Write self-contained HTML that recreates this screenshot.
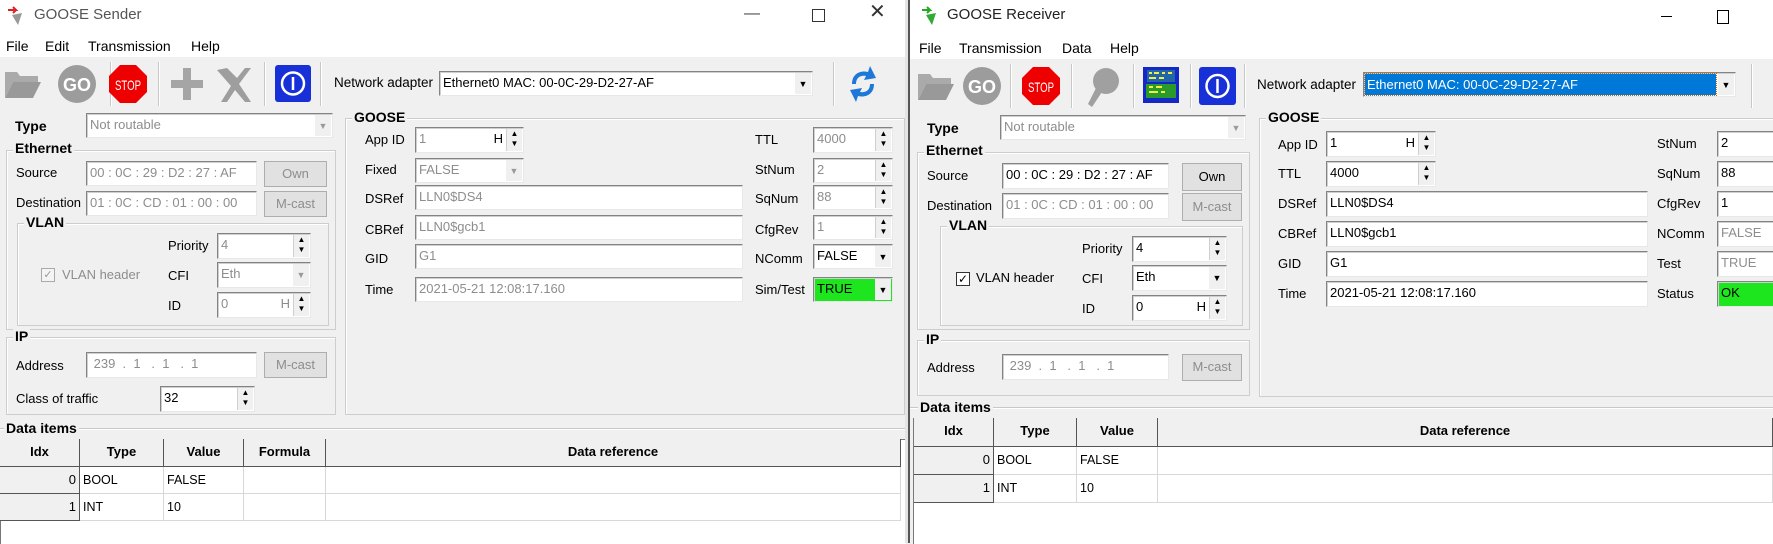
<!DOCTYPE html>
<html><head><meta charset="utf-8"><style>
body{margin:0;width:1773px;height:543px;position:relative;overflow:hidden;background:#f0f0f0;font:13px "Liberation Sans",sans-serif;color:#000}
.a{position:absolute}
.l{position:absolute;line-height:16px;white-space:nowrap}
.f{position:absolute;background:#fff;border:1px solid;border-color:#838383 #e8e8e8 #e8e8e8 #838383;box-shadow:inset 1px 1px 0 #cfcfcf;box-sizing:border-box;padding:0 3px;line-height:22px;white-space:nowrap;overflow:hidden}
.d{color:#8d8d8d}
.sp{position:absolute;right:1px;top:1px;bottom:1px;width:15px;background:#f0f0f0;border-left:1px solid #cfcfcf;font-size:8px;line-height:10px;text-align:center;color:#000}
.dd{position:absolute;right:1px;top:1px;bottom:1px;width:16px;background:#f0f0f0;font-size:9px;line-height:22px;text-align:center;color:#000}
.dd.x{color:#9a9a9a}
.h{position:absolute;right:20px;top:0}
.g{position:absolute;border:1px solid #cdcdcd;box-shadow:inset 1px 1px 0 #fff;box-sizing:border-box}
.gt{position:absolute;font-weight:bold;background:#f0f0f0;padding:0 2px;line-height:18px;font-size:14px}
.b{position:absolute;background:#e1e1e1;border:1px solid #adadad;box-sizing:border-box;text-align:center;line-height:24px}
.sep{position:absolute;top:62px;width:1px;height:44px;background:#c8c8c8;box-shadow:1px 0 0 #fff}
.tb{position:absolute;background:#fff;border-left:1px solid #777;border-top:1px solid #777}
.hc{position:absolute;background:#f0f0f0;border-right:1px solid #555;border-bottom:1px solid #555;box-sizing:border-box;font-weight:bold;text-align:center;line-height:26px}
.c{position:absolute;border-right:1px solid #d8d8d8;border-bottom:1px solid #d8d8d8;box-sizing:border-box;line-height:26px;padding-left:3px;font-size:12.5px}
.ic{position:absolute;background:#f0f0f0;border-right:1px solid #555;border-bottom:1px solid #555;box-sizing:border-box;line-height:26px;text-align:right;padding-right:3px}
.w{position:absolute;background:#fff}
</style></head><body>

<!-- ============ SENDER ============ -->
<div class="w" style="left:0;top:0;width:905px;height:57px"></div>
<svg class="a" style="left:6px;top:6px" width="22" height="22" viewBox="0 0 22 22"><path d="M2 4h8l-3-3M10 4l-3 3" stroke="#d22" stroke-width="2" fill="none"/><path d="M6 9l10-2-4 12z" fill="#999"/></svg>
<div class="l" style="left:34px;top:7px;font-size:15px;color:#555">GOOSE Sender</div>
<div class="l" style="left:744px;top:6px;font-size:16px;color:#444">—</div>
<div class="a" style="left:812px;top:9px;width:11px;height:11px;border:1px solid #333"></div>
<div class="l" style="left:869px;top:4px;font-size:20px;color:#333">✕</div>
<div class="l" style="left:6px;top:38px;font-size:14px">File</div>
<div class="l" style="left:45px;top:38px;font-size:14px">Edit</div>
<div class="l" style="left:88px;top:38px;font-size:14px">Transmission</div>
<div class="l" style="left:191px;top:38px;font-size:14px">Help</div>

<svg class="a" style="left:3px;top:66px" width="40" height="36" viewBox="0 0 40 36"><path d="M2 6h12l3 4h18v6H10L2 32z" fill="#aaa"/><path d="M10 16h28l-8 16H2z" fill="#999"/></svg>
<svg class="a" style="left:57px;top:64px" width="40" height="40"><circle cx="20" cy="20" r="19" fill="#9c9c9c"/><text x="20" y="27" font-family="Liberation Sans" font-weight="bold" font-size="18" fill="#fff" text-anchor="middle">GO</text></svg>
<div class="sep" style="left:110px"></div>
<svg class="a" style="left:108px;top:64px" width="40" height="40"><polygon points="12,1 28,1 39,12 39,28 28,39 12,39 1,28 1,12" fill="#e00"/><text x="20" y="26" font-family="Liberation Sans" font-size="14" fill="#fff" text-anchor="middle" textLength="26" lengthAdjust="spacingAndGlyphs">STOP</text></svg>
<div class="sep" style="left:158px"></div>
<svg class="a" style="left:170px;top:66px" width="34" height="36"><path d="M13 2h8v12h12v8H21v12h-8V22H1v-8h12z" fill="#a5a5a5"/></svg>
<svg class="a" style="left:213px;top:64px" width="40" height="40"><path d="M4 6l14 16L8 38h6l8-12 10 12h6L26 20 38 4h-6l-8 10-10-10z" fill="#9e9e9e"/></svg>
<div class="sep" style="left:264px"></div>
<div class="a" style="left:275px;top:65px;width:36px;height:37px;background:#1830d8;border-radius:3px"></div>
<svg class="a" style="left:275px;top:65px" width="36" height="37"><circle cx="18" cy="18.5" r="11" stroke="#fff" stroke-width="2.5" fill="none"/><line x1="18" y1="12" x2="18" y2="25" stroke="#fff" stroke-width="2.5"/></svg>
<div class="sep" style="left:320px"></div>
<div class="l" style="left:334px;top:75px;font-size:13.5px">Network adapter</div>
<div class="f" style="left:439px;top:71px;width:374px;height:25px">Ethernet0 MAC: 00-0C-29-D2-27-AF<div class="dd">▼</div></div>
<div class="sep" style="left:833px"></div>
<svg class="a" style="left:846px;top:64px" width="34" height="40" viewBox="0 0 34 40"><path d="M6 20C6 10 14 6 22 8l2-6 6 12-12 2 2-4C14 11 10 14 10 20z" fill="#1e78d8"/><path d="M28 20c0 10-8 14-16 12l-2 6-6-12 12-2-2 4c6 1 10-2 10-8z" fill="#1e78d8"/></svg>

<div class="l" style="left:15px;top:118px;font-weight:bold;font-size:14px">Type</div>
<div class="f d" style="left:86px;top:113px;width:247px;height:25px">Not routable<div class="dd x">▼</div></div>

<div class="g" style="left:6px;top:150px;width:330px;height:180px"></div>
<div class="gt" style="left:13px;top:139px">Ethernet</div>
<div class="l" style="left:16px;top:165px">Source</div>
<div class="f d" style="left:86px;top:161px;width:171px;height:25px">00 : 0C : 29 : D2 : 27 : AF</div>
<div class="b d" style="left:264px;top:161px;width:63px;height:26px">Own</div>
<div class="l" style="left:16px;top:195px">Destination</div>
<div class="f d" style="left:86px;top:191px;width:171px;height:25px">01 : 0C : CD : 01 : 00 : 00</div>
<div class="b d" style="left:264px;top:191px;width:63px;height:26px">M-cast</div>
<div class="g" style="left:17px;top:223px;width:312px;height:103px"></div>
<div class="gt" style="left:24px;top:213px">VLAN</div>
<div class="l" style="left:168px;top:238px">Priority</div>
<div class="f d" style="left:217px;top:233px;width:94px;height:26px">4<div class="sp">▲<br>▼</div></div>
<div class="a" style="left:41px;top:268px;width:12px;height:12px;border:1px solid #aaa;background:#f4f4f4;color:#999;font-size:11px;line-height:12px;text-align:center">✓</div>
<div class="l d" style="left:62px;top:267px">VLAN header</div>
<div class="l" style="left:168px;top:268px">CFI</div>
<div class="f d" style="left:217px;top:262px;width:94px;height:26px">Eth<div class="dd x">▼</div></div>
<div class="l" style="left:168px;top:298px">ID</div>
<div class="f d" style="left:217px;top:292px;width:94px;height:26px">0<span class="h">H</span><div class="sp">▲<br>▼</div></div>

<div class="g" style="left:6px;top:337px;width:330px;height:78px"></div>
<div class="gt" style="left:13px;top:327px">IP</div>
<div class="l" style="left:16px;top:358px">Address</div>
<div class="f d" style="left:86px;top:352px;width:171px;height:26px">&nbsp;239 &nbsp;. &nbsp;1 &nbsp; . &nbsp;1 &nbsp; . &nbsp;1</div>
<div class="b d" style="left:264px;top:352px;width:63px;height:26px">M-cast</div>
<div class="l" style="left:16px;top:391px">Class of traffic</div>
<div class="f" style="left:160px;top:386px;width:95px;height:26px">32<div class="sp">▲<br>▼</div></div>

<div class="g" style="left:345px;top:118px;width:560px;height:297px"></div>
<div class="gt" style="left:352px;top:108px">GOOSE</div>
<div class="l" style="left:365px;top:132px">App ID</div>
<div class="f d" style="left:415px;top:127px;width:109px;height:26px">1<span class="h" style="color:#000">H</span><div class="sp">▲<br>▼</div></div>
<div class="l" style="left:365px;top:162px">Fixed</div>
<div class="f d" style="left:415px;top:158px;width:109px;height:25px">FALSE<div class="dd x">▼</div></div>
<div class="l" style="left:365px;top:191px">DSRef</div>
<div class="f d" style="left:415px;top:185px;width:328px;height:25px">LLN0$DS4</div>
<div class="l" style="left:365px;top:222px">CBRef</div>
<div class="f d" style="left:415px;top:215px;width:328px;height:25px">LLN0$gcb1</div>
<div class="l" style="left:365px;top:251px">GID</div>
<div class="f d" style="left:415px;top:244px;width:328px;height:25px">G1</div>
<div class="l" style="left:365px;top:282px">Time</div>
<div class="f d" style="left:415px;top:277px;width:328px;height:25px">2021-05-21 12:08:17.160</div>
<div class="l" style="left:755px;top:132px">TTL</div>
<div class="f d" style="left:813px;top:127px;width:80px;height:26px">4000<div class="sp">▲<br>▼</div></div>
<div class="l" style="left:755px;top:162px">StNum</div>
<div class="f d" style="left:813px;top:158px;width:80px;height:25px">2<div class="sp">▲<br>▼</div></div>
<div class="l" style="left:755px;top:191px">SqNum</div>
<div class="f d" style="left:813px;top:185px;width:80px;height:25px">88<div class="sp">▲<br>▼</div></div>
<div class="l" style="left:755px;top:222px">CfgRev</div>
<div class="f d" style="left:813px;top:215px;width:80px;height:25px">1<div class="sp">▲<br>▼</div></div>
<div class="l" style="left:755px;top:251px">NComm</div>
<div class="f" style="left:813px;top:244px;width:80px;height:25px">FALSE<div class="dd">▼</div></div>
<div class="l" style="left:755px;top:282px">Sim/Test</div>
<div class="f" style="left:813px;top:277px;width:80px;height:25px;background:#1ee61e">TRUE<div class="dd">▼</div></div>

<div class="a" style="left:0;top:428px;width:905px;height:1px;background:#c8c8c8;box-shadow:0 1px 0 #fff"></div>
<div class="gt" style="left:4px;top:419px">Data items</div>
<div class="tb" style="left:0;top:439px;width:905px;height:104px"></div>
<div class="hc" style="left:0;top:439px;width:80px;height:28px">Idx</div>
<div class="hc" style="left:80px;top:439px;width:84px;height:28px">Type</div>
<div class="hc" style="left:164px;top:439px;width:80px;height:28px">Value</div>
<div class="hc" style="left:244px;top:439px;width:82px;height:28px">Formula</div>
<div class="hc" style="left:326px;top:439px;width:575px;height:28px">Data reference</div>
<div class="ic" style="left:0;top:467px;width:80px;height:27px">0</div>
<div class="c" style="left:80px;top:467px;width:84px;height:27px">BOOL</div>
<div class="c" style="left:164px;top:467px;width:80px;height:27px">FALSE</div>
<div class="c" style="left:244px;top:467px;width:82px;height:27px"></div>
<div class="c" style="left:326px;top:467px;width:575px;height:27px"></div>
<div class="ic" style="left:0;top:494px;width:80px;height:27px">1</div>
<div class="c" style="left:80px;top:494px;width:84px;height:27px">INT</div>
<div class="c" style="left:164px;top:494px;width:80px;height:27px">10</div>
<div class="c" style="left:244px;top:494px;width:82px;height:27px"></div>
<div class="c" style="left:326px;top:494px;width:575px;height:27px"></div>

<!-- divider -->
<div class="a" style="left:905px;top:0;width:3px;height:543px;background:#e4e4e4"></div>
<div class="a" style="left:908px;top:0;width:2px;height:543px;background:#555"></div>

<!-- ============ RECEIVER ============ -->
<div class="w" style="left:910px;top:0;width:863px;height:59px"></div>
<svg class="a" style="left:920px;top:6px" width="22" height="22" viewBox="0 0 22 22"><path d="M2 4h8l-3-3M10 4l-3 3" stroke="#2a2" stroke-width="2" fill="none"/><path d="M6 9l10-2-4 12z" fill="#3a3"/></svg>
<div class="l" style="left:947px;top:7px;font-size:15px;color:#222">GOOSE Receiver</div>
<div class="a" style="left:1661px;top:16px;width:11px;height:1px;background:#000"></div>
<div class="a" style="left:1717px;top:10px;width:10px;height:12px;border:1px solid #000"></div>
<div class="l" style="left:919px;top:40px;font-size:14px">File</div>
<div class="l" style="left:959px;top:40px;font-size:14px">Transmission</div>
<div class="l" style="left:1062px;top:40px;font-size:14px">Data</div>
<div class="l" style="left:1110px;top:40px;font-size:14px">Help</div>

<svg class="a" style="left:916px;top:68px" width="40" height="36" viewBox="0 0 40 36"><path d="M2 6h12l3 4h18v6H10L2 32z" fill="#aaa"/><path d="M10 16h28l-8 16H2z" fill="#999"/></svg>
<svg class="a" style="left:962px;top:66px" width="40" height="40"><circle cx="20" cy="20" r="19" fill="#9c9c9c"/><text x="20" y="27" font-family="Liberation Sans" font-weight="bold" font-size="18" fill="#fff" text-anchor="middle">GO</text></svg>
<div class="sep" style="left:1010px;top:64px"></div>
<svg class="a" style="left:1021px;top:66px" width="40" height="40"><polygon points="12,1 28,1 39,12 39,28 28,39 12,39 1,28 1,12" fill="#e00"/><text x="20" y="26" font-family="Liberation Sans" font-size="14" fill="#fff" text-anchor="middle" textLength="26" lengthAdjust="spacingAndGlyphs">STOP</text></svg>
<div class="sep" style="left:1071px;top:64px"></div>
<svg class="a" style="left:1082px;top:66px" width="40" height="42"><circle cx="24" cy="15" r="13" fill="#a0a0a0"/><path d="M14 22l-8 16 4 3 10-15z" fill="#a0a0a0"/></svg>
<div class="sep" style="left:1133px;top:64px"></div>
<div class="a" style="left:1143px;top:67px;width:36px;height:36px;background:#1428c8"></div>
<div class="a" style="left:1147px;top:70px;width:28px;height:12px;background:#26a"></div>
<div class="a" style="left:1146px;top:84px;width:30px;height:14px;background:#2a9a2a"></div>
<svg class="a" style="left:1143px;top:67px" width="36" height="36"><g fill="#ee4"><rect x="6" y="5" width="3" height="2"/><rect x="11" y="5" width="5" height="2"/><rect x="19" y="5" width="3" height="2"/><rect x="25" y="5" width="4" height="2"/><rect x="6" y="10" width="7" height="2"/><rect x="16" y="10" width="5" height="2"/><rect x="6" y="19" width="4" height="2"/><rect x="13" y="19" width="6" height="2"/><rect x="6" y="24" width="9" height="2"/><rect x="18" y="24" width="4" height="2"/></g></svg>
<div class="sep" style="left:1190px;top:64px"></div>
<div class="a" style="left:1199px;top:67px;width:37px;height:38px;background:#1830d8;border-radius:3px"></div>
<svg class="a" style="left:1199px;top:67px" width="37" height="38"><circle cx="18.5" cy="19" r="11" stroke="#fff" stroke-width="2.5" fill="none"/><line x1="18.5" y1="12" x2="18.5" y2="26" stroke="#fff" stroke-width="2.5"/></svg>
<div class="sep" style="left:1244px;top:64px"></div>
<div class="l" style="left:1257px;top:77px;font-size:13.5px">Network adapter</div>
<div class="f" style="left:1363px;top:72px;width:373px;height:25px;padding:1px">
<div style="background:#0078d7;color:#fff;outline:1px dotted #c60;height:21px;line-height:21px;margin-right:18px;padding-left:2px">Ethernet0 MAC: 00-0C-29-D2-27-AF</div><div class="dd">▼</div></div>
<div class="sep" style="left:1751px;top:64px"></div>

<div class="l" style="left:927px;top:120px;font-weight:bold;font-size:14px">Type</div>
<div class="f d" style="left:1000px;top:115px;width:246px;height:25px">Not routable<div class="dd x">▼</div></div>

<div class="g" style="left:917px;top:152px;width:333px;height:178px"></div>
<div class="gt" style="left:924px;top:141px">Ethernet</div>
<div class="l" style="left:927px;top:168px">Source</div>
<div class="f" style="left:1002px;top:163px;width:167px;height:26px">00 : 0C : 29 : D2 : 27 : AF</div>
<div class="b" style="left:1182px;top:163px;width:60px;height:28px;line-height:26px">Own</div>
<div class="l" style="left:927px;top:198px">Destination</div>
<div class="f d" style="left:1002px;top:193px;width:167px;height:26px">01 : 0C : CD : 01 : 00 : 00</div>
<div class="b d" style="left:1182px;top:193px;width:60px;height:28px;line-height:26px">M-cast</div>
<div class="g" style="left:940px;top:226px;width:303px;height:100px"></div>
<div class="gt" style="left:947px;top:216px">VLAN</div>
<div class="l" style="left:1082px;top:241px">Priority</div>
<div class="f" style="left:1132px;top:236px;width:95px;height:26px">4<div class="sp">▲<br>▼</div></div>
<div class="a" style="left:956px;top:272px;width:12px;height:12px;border:1px solid #333;background:#fff;font-size:12px;line-height:12px;text-align:center">✓</div>
<div class="l" style="left:976px;top:270px">VLAN header</div>
<div class="l" style="left:1082px;top:271px">CFI</div>
<div class="f" style="left:1132px;top:265px;width:95px;height:26px">Eth<div class="dd">▼</div></div>
<div class="l" style="left:1082px;top:301px">ID</div>
<div class="f" style="left:1132px;top:295px;width:95px;height:26px">0<span class="h">H</span><div class="sp">▲<br>▼</div></div>

<div class="g" style="left:917px;top:340px;width:333px;height:56px"></div>
<div class="gt" style="left:924px;top:330px">IP</div>
<div class="l" style="left:927px;top:360px">Address</div>
<div class="f d" style="left:1002px;top:354px;width:167px;height:26px">&nbsp;239 &nbsp;. &nbsp;1 &nbsp; . &nbsp;1 &nbsp; . &nbsp;1</div>
<div class="b d" style="left:1182px;top:354px;width:60px;height:27px">M-cast</div>

<div class="g" style="left:1259px;top:118px;width:530px;height:279px"></div>
<div class="gt" style="left:1266px;top:108px">GOOSE</div>
<div class="l" style="left:1278px;top:137px">App ID</div>
<div class="f" style="left:1326px;top:131px;width:110px;height:26px">1<span class="h">H</span><div class="sp">▲<br>▼</div></div>
<div class="l" style="left:1278px;top:166px">TTL</div>
<div class="f" style="left:1326px;top:161px;width:110px;height:26px">4000<div class="sp">▲<br>▼</div></div>
<div class="l" style="left:1278px;top:196px">DSRef</div>
<div class="f" style="left:1326px;top:191px;width:322px;height:26px">LLN0$DS4</div>
<div class="l" style="left:1278px;top:226px">CBRef</div>
<div class="f" style="left:1326px;top:221px;width:322px;height:26px">LLN0$gcb1</div>
<div class="l" style="left:1278px;top:256px">GID</div>
<div class="f" style="left:1326px;top:251px;width:322px;height:26px">G1</div>
<div class="l" style="left:1278px;top:286px">Time</div>
<div class="f" style="left:1326px;top:281px;width:322px;height:26px">2021-05-21 12:08:17.160</div>
<div class="l" style="left:1657px;top:136px">StNum</div>
<div class="f" style="left:1717px;top:131px;width:70px;height:26px">2</div>
<div class="l" style="left:1657px;top:166px">SqNum</div>
<div class="f" style="left:1717px;top:161px;width:70px;height:26px">88</div>
<div class="l" style="left:1657px;top:196px">CfgRev</div>
<div class="f" style="left:1717px;top:191px;width:70px;height:26px">1</div>
<div class="l" style="left:1657px;top:226px">NComm</div>
<div class="f d" style="left:1717px;top:221px;width:70px;height:26px">FALSE</div>
<div class="l" style="left:1657px;top:256px">Test</div>
<div class="f d" style="left:1717px;top:251px;width:70px;height:26px">TRUE</div>
<div class="l" style="left:1657px;top:286px">Status</div>
<div class="f" style="left:1717px;top:281px;width:70px;height:26px;background:#1ee61e">OK</div>

<div class="a" style="left:910px;top:407px;width:863px;height:1px;background:#c8c8c8;box-shadow:0 1px 0 #fff"></div>
<div class="gt" style="left:918px;top:398px">Data items</div>
<div class="tb" style="left:913px;top:418px;width:860px;height:125px"></div>
<div class="hc" style="left:914px;top:418px;width:80px;height:29px">Idx</div>
<div class="hc" style="left:994px;top:418px;width:83px;height:29px">Type</div>
<div class="hc" style="left:1077px;top:418px;width:81px;height:29px">Value</div>
<div class="hc" style="left:1158px;top:418px;width:615px;height:29px">Data reference</div>
<div class="ic" style="left:914px;top:447px;width:80px;height:28px">0</div>
<div class="c" style="left:994px;top:447px;width:83px;height:28px">BOOL</div>
<div class="c" style="left:1077px;top:447px;width:81px;height:28px">FALSE</div>
<div class="c" style="left:1158px;top:447px;width:615px;height:28px"></div>
<div class="ic" style="left:914px;top:475px;width:80px;height:28px">1</div>
<div class="c" style="left:994px;top:475px;width:83px;height:28px">INT</div>
<div class="c" style="left:1077px;top:475px;width:81px;height:28px">10</div>
<div class="c" style="left:1158px;top:475px;width:615px;height:28px"></div>
</body></html>
